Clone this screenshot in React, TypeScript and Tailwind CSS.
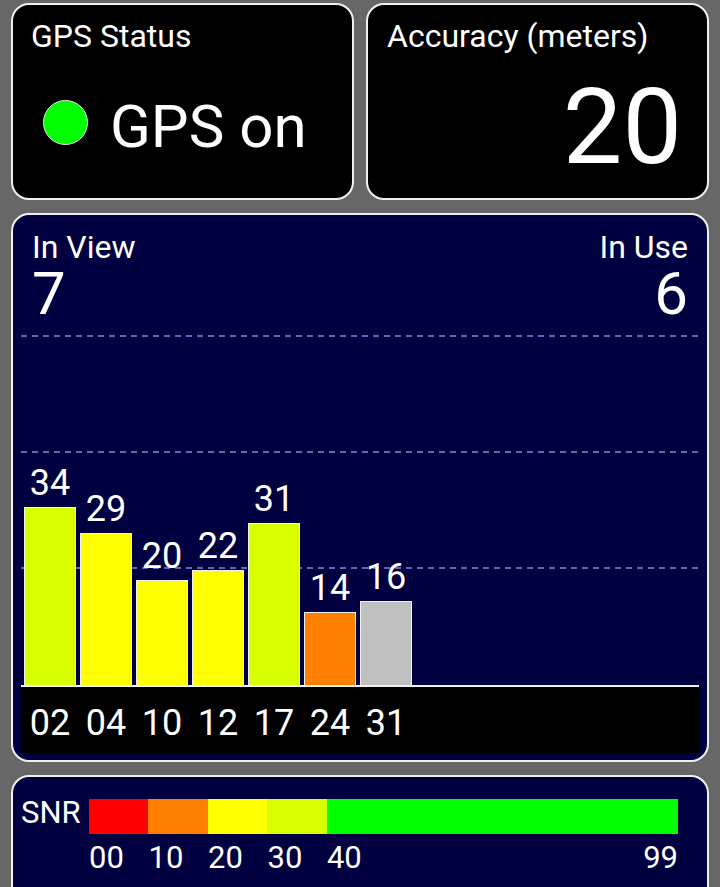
import React from 'react';

const sats = [
  { prn: '02', snr: 34, color: 'bg-[#d8ff00]' },
  { prn: '04', snr: 29, color: 'bg-[#ffff00]' },
  { prn: '10', snr: 20, color: 'bg-[#ffff00]' },
  { prn: '12', snr: 22, color: 'bg-[#ffff00]' },
  { prn: '17', snr: 31, color: 'bg-[#d8ff00]' },
  { prn: '24', snr: 14, color: 'bg-[#ff8000]' },
  { prn: '31', snr: 16, color: 'bg-[#c0c0c0]' },
];

const segments = [
  { label: '00', color: 'bg-[#ff0000]' },
  { label: '10', color: 'bg-[#ff8000]' },
  { label: '20', color: 'bg-[#ffff00]' },
  { label: '30', color: 'bg-[#d8ff00]' },
];

function Dashed({ pos }: { pos: string }) {
  return (
    <div
      className={`absolute left-0 right-0 h-[2px] bg-[repeating-linear-gradient(90deg,#6565b8_0_6px,transparent_6px_11px)] ${pos}`}
    />
  );
}

export default function App() {
  return (
    <div className="w-[720px] h-[887px] overflow-hidden bg-[#676767] font-['Roboto',sans-serif] text-white px-[11px] pt-[3px] flex flex-col gap-[13px]">
      {/* Top row */}
      <div className="flex gap-[12px] h-[197px] shrink-0">
        <div className="w-[343px] shrink-0 rounded-[18px] border-2 border-[#f0f0f0] bg-black pl-[18px] pt-[15px]">
          <div className="text-[32px] leading-none">GPS Status</div>
          <div className="mt-[45px] ml-[12px] flex items-start">
            <div className="mt-[3px] w-[45px] h-[45px] rounded-full bg-[#00ff00] border border-[#d8f0d8]" />
            <div className="ml-[22px] text-[60px] leading-none">GPS on</div>
          </div>
        </div>
        <div className="w-[343px] shrink-0 rounded-[18px] border-2 border-[#f0f0f0] bg-black pl-[19px] pr-[25px] pt-[15px]">
          <div className="text-[32px] leading-none">Accuracy (meters)</div>
          <div className="mt-[22px] text-right text-[106px] leading-none">20</div>
        </div>
      </div>

      {/* Chart panel */}
      <div className="shrink-0 rounded-[18px] border-2 border-[#f0f0f0] bg-[#000040] pt-[16px] pb-[7px] flex flex-col">
        <div className="flex justify-between pl-[19px] pr-[19px]">
          <div>
            <div className="text-[32px] leading-none">In View</div>
            <div className="mt-[1px] text-[60px] leading-none">7</div>
          </div>
          <div className="text-right">
            <div className="text-[32px] leading-none">In Use</div>
            <div className="mt-[1px] text-[60px] leading-none">6</div>
          </div>
        </div>
        <div className="relative mx-[8px] h-[361px] flex items-end gap-[4px] pl-[3px]">
          <Dashed pos="bottom-[116px]" />
          <Dashed pos="bottom-[232px]" />
          <Dashed pos="bottom-[348px]" />
          {sats.map((s) => (
            <div key={s.prn} className="relative w-[52px] flex flex-col items-center">
              <div className="text-[36px] leading-none mb-[6px]">{s.snr}</div>
              <div
                className={`w-full border-[1.5px] border-b-0 border-[#f0f0f0] ${s.color}`}
                style={{ height: s.snr * 5.24 }}
              />
            </div>
          ))}
        </div>
        <div className="mx-[8px] h-[68px] bg-black border-t-2 border-[#f0f0f0] flex gap-[4px] pl-[3px] pt-[18px]">
          {sats.map((s) => (
            <div key={s.prn} className="w-[52px] text-center text-[36px] leading-none">
              {s.prn}
            </div>
          ))}
        </div>
      </div>

      {/* SNR legend */}
      <div className="shrink-0 h-[140px] rounded-t-[18px] border-2 border-b-0 border-[#f0f0f0] bg-[#000040] pt-[20px] pl-[8px] pr-[29px] flex items-start">
        <div className="w-[68px] text-[31px] leading-none">SNR</div>
        <div className="flex-1">
          <div className="mt-[2px] h-[35px] flex">
            {segments.map((g) => (
              <div key={g.label} className={`w-[10.101%] ${g.color}`} />
            ))}
            <div className="flex-1 bg-[#00ff00]" />
          </div>
          <div className="mt-[8px] flex text-[31px] leading-none">
            {segments.map((g) => (
              <div key={g.label} className="w-[10.101%]">
                {g.label}
              </div>
            ))}
            <div className="flex-1 flex justify-between">
              <span>40</span>
              <span>99</span>
            </div>
          </div>
        </div>
      </div>
    </div>
  );
}
